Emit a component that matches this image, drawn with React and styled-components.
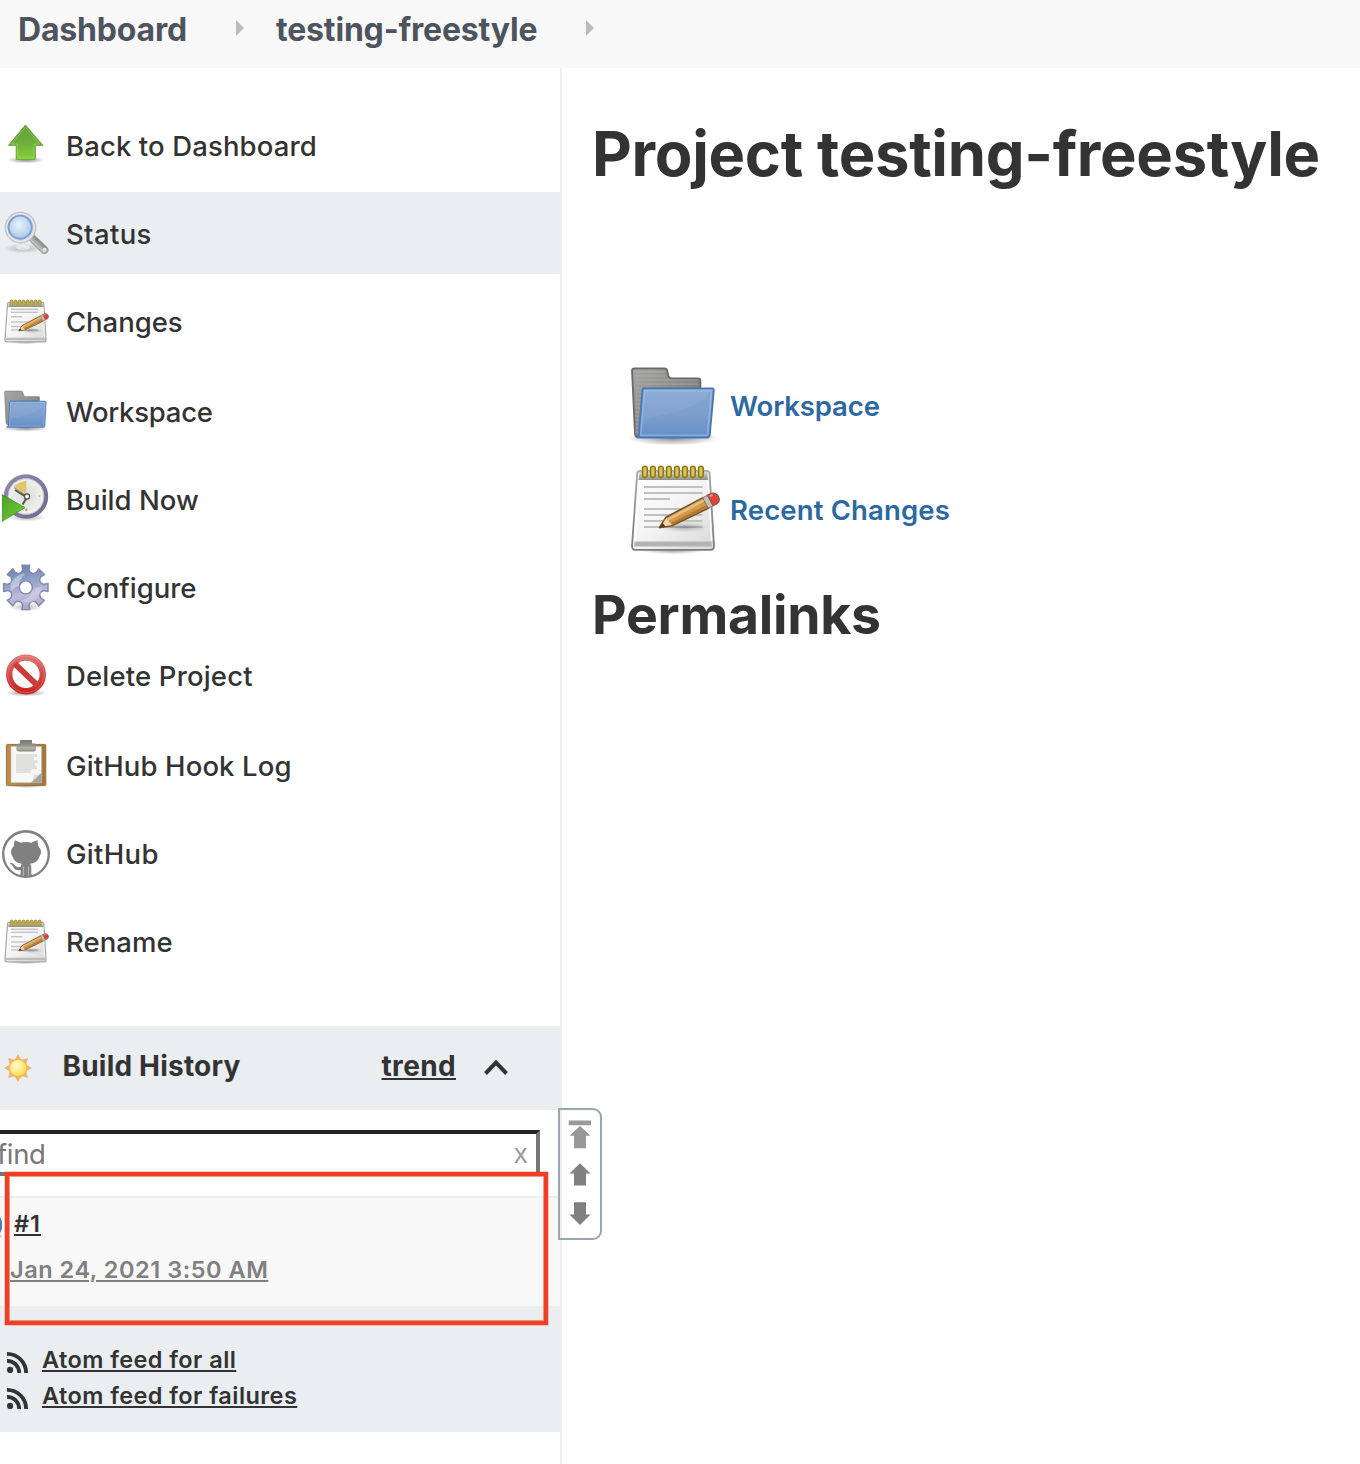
import React from "react";
import styled, { createGlobalStyle, css } from "styled-components";

const GlobalStyle = createGlobalStyle`
  * { box-sizing: border-box; }
  html, body { margin: 0; padding: 0; background: #fff; }
  body { font-family: "Inter", "Liberation Sans", sans-serif; color: #333; overflow: hidden; }
  svg { display: block; flex: none; }
`;

const Page = styled.div`
  width: 1360px;
  height: 1464px;
  display: flex;
  flex-direction: column;
  overflow: hidden;
  position: relative;
`;

const Breadcrumbs = styled.header`
  height: 68px;
  flex: none;
  display: flex;
  align-items: flex-start;
  padding-left: 18px;
  background: #f8f8f8;
`;

const Crumb = styled.a`
  width: ${(p) => p.$width}px;
  font-size: 32px;
  font-weight: 700;
  letter-spacing: -0.18px;
  line-height: 59px;
  color: #4d545d;
  white-space: nowrap;
`;

const CrumbArrow = styled.svg`
  margin: 20px 32px 0 0;
`;

const Body = styled.div`
  flex: 1;
  display: flex;
`;

const Sidebar = styled.aside`
  width: 562px;
  flex: none;
  border-right: 2px solid #eaeff2;
  overflow: hidden;
`;

const Nav = styled.nav`
  padding: 36px 0 44px;
`;

const NavItem = styled.a`
  display: flex;
  height: 82px;
  margin-top: ${(p) => p.$gap}px;
  padding-left: 2px;
  background: ${(p) => (p.$active ? "#eaeef1" : "transparent")};
  svg {
    margin-top: ${(p) => p.$iconTop || 17}px;
    filter: blur(0.5px);
  }
`;

const NavLabel = styled.span`
  margin-left: 16px;
  padding-top: 1px;
  font-size: 27.5px;
  font-weight: 450;
  line-height: 82px;
  letter-spacing: ${(p) => p.$track ?? 0.12}px;
  white-space: nowrap;
`;

const HistoryHeader = styled.div`
  height: 84px;
  display: flex;
  align-items: flex-start;
  padding: 0 0 0 3px;
  background: #eaeef1;
  svg { margin-top: 27px; }
`;

const HistoryTitle = styled.span`
  width: 319px;
  margin-left: 29.5px;
  font-size: 28px;
  font-weight: 650;
  line-height: 81px;
  letter-spacing: 0.2px;
`;

const underline = css`
  text-decoration: underline;
  text-decoration-thickness: 2px;
  text-underline-offset: 2px;
`;

const TrendLink = styled.a`
  width: 102.5px;
  font-size: 28px;
  font-weight: 650;
  line-height: 81px;
  letter-spacing: 0.35px;
  ${underline}
`;

const SearchArea = styled.div`
  padding: 20px 0;
`;

const SearchBox = styled.div`
  width: 550px;
  height: 46px;
  margin-left: -10px;
  display: flex;
  justify-content: space-between;
  padding: 0 8.5px 0 3px;
  border: 4px solid;
  border-color: #222 #767676 #767676 #222;
  font-size: 27.5px;
  line-height: 40px;
  color: #777;
`;

const Placeholder = styled.span`
  font-weight: 400;
  letter-spacing: -0.35px;
`;

const Clear = styled.span`
  font-family: "Liberation Sans", Arial, sans-serif;
  font-size: 27px;
  line-height: 40px;
  color: #999;
`;

const BuildRow = styled.div`
  height: 110px;
  border-top: 2px solid #eaeef1;
  background: #f8f8f8;
`;

const BuildLine = styled.div`
  display: flex;
  height: 46px;
  margin-left: -30px;
  svg { margin-top: 11px; }
`;

const BuildNumber = styled.a`
  margin-left: 12px;
  font-size: 23.5px;
  font-weight: 570;
  line-height: 51px;
  letter-spacing: 1px;
  ${underline}
`;

const BuildDate = styled.a`
  display: block;
  margin-left: 10px;
  font-size: 23.5px;
  font-weight: 570;
  line-height: 51px;
  letter-spacing: 0.54px;
  color: #808080;
  white-space: nowrap;
  ${underline}
`;

const Feeds = styled.div`
  height: 126px;
  padding: 36px 0 0 7px;
  background: #eaeef1;
`;

const Feed = styled.a`
  display: flex;
  height: 36px;
  svg { margin-top: 10px; }
  span {
    margin-left: 14px;
    font-size: 23.5px;
    font-weight: 570;
    line-height: 35px;
    letter-spacing: 0.44px;
    white-space: nowrap;
    ${underline}
  }
`;

const Main = styled.main`
  flex: 1;
  padding-left: 30px;
`;

const Title = styled.h1`
  margin: 0;
  padding-top: 46px;
  height: 288px;
  font-size: 61.5px;
  font-weight: 700;
  line-height: 80px;
  letter-spacing: -0.32px;
  white-space: nowrap;
`;

const Shortcut = styled.a`
  display: flex;
  height: 96px;
  margin: 0 0 8px 34px;
`;

const ShortcutLabel = styled.span`
  margin-left: 8px;
  font-size: 27.5px;
  font-weight: 570;
  line-height: 100px;
  letter-spacing: ${(p) => p.$track}px;
  color: #2c69a0;
  white-space: nowrap;
`;

const SectionTitle = styled.h2`
  margin: 15px 0 0;
  padding-top: 9px;
  font-size: 53.5px;
  font-weight: 700;
  line-height: 70px;
  letter-spacing: -0.28px;
`;

const ScrollPanel = styled.div`
  position: absolute;
  left: 558px;
  top: 1108px;
  width: 44px;
  height: 132px;
  padding: 10px 0 0 8px;
  border: 2px solid #9aa6ae;
  border-radius: 0 9px 9px 0;
  svg { filter: blur(0.4px); }
`;

const Highlight = styled.div`
  position: absolute;
  left: 5px;
  top: 1172px;
  width: 543px;
  height: 153px;
  border: 4px solid #ee4024;
  box-shadow: 0 0 0 0.5px rgba(238, 64, 36, 0.55), inset 0 0 0 1px rgba(238, 64, 36, 0.55);
`;

/* ---------- icons, all on a 48-unit grid ---------- */

const UpIcon = () => (
  <svg width="48" height="48" viewBox="0 0 48 48">
    <defs>
      <linearGradient id="up" x1="0" y1="0" x2="0" y2="1">
        <stop offset="0" stopColor="#5f9f35" /><stop offset=".55" stopColor="#6fb03c" /><stop offset="1" stopColor="#84d336" />
      </linearGradient>
      <radialGradient id="shade"><stop offset="0" stopColor="#000" stopOpacity=".45" /><stop offset="1" stopColor="#000" stopOpacity="0" /></radialGradient>
    </defs>
    <ellipse cx="23.7" cy="39" rx="19" ry="3.5" fill="url(#shade)" />
    <path d="M23.4 4 L41 24.4 H33.4 V38.4 H14.2 V24.4 H6.4 Z" fill="url(#up)" stroke="#6fa548" strokeWidth="1" strokeLinejoin="round" />
    <path d="M23.4 6.5 L37.8 23 H32 V37 H15.6 V23 H9.5 Z" fill="none" stroke="#a3dc70" strokeOpacity=".5" />
  </svg>
);

const SearchIcon = () => (
  <svg width="48" height="48" viewBox="0 0 48 48">
    <defs>
      <radialGradient id="lens" cx=".45" cy=".4" r=".6"><stop offset="0" stopColor="#e9f2fc" /><stop offset=".6" stopColor="#c3d8f1" /><stop offset="1" stopColor="#a9c6ea" /></radialGradient>
      <linearGradient id="handle" x1="0" y1="1" x2="1" y2="0"><stop offset=".3" stopColor="#c9c9c7" /><stop offset=".7" stopColor="#858585" /></linearGradient>
    </defs>
    <ellipse cx="21" cy="39.5" rx="19" ry="5" fill="url(#shade)" opacity=".55" />
    <ellipse cx="21" cy="38.5" rx="7" ry="2.5" fill="#fff" opacity=".6" />
    <path d="M31 30 L42.5 41" stroke="#a4a6a6" strokeWidth="8" strokeLinecap="round" />
    <path d="M31 29.5 L42.5 40.5" stroke="url(#handle)" strokeWidth="6" strokeLinecap="round" />
    <circle cx="42.6" cy="40.8" r="2" fill="#e4e4e2" />
    <circle cx="18.5" cy="18.6" r="14.4" fill="#d8e4f2" stroke="#bdbfbe" strokeWidth="2.8" />
    <circle cx="18.5" cy="18.6" r="13.8" fill="none" stroke="#e6e8e8" strokeWidth="1.6" />
    <circle cx="18.2" cy="18.2" r="11.6" fill="url(#lens)" stroke="#7d9fd0" strokeWidth="1.9" />
  </svg>
);

const NotepadIcon = ({ size = 48 }) => {
  const small = size === 48;
  const lines = small
    ? [[12.3, 36], [15.3, 36], [19.7, 20], [25, 32], [29.5, 26], [33, 36]]
    : [[13.5, 38.2], [16.5, 38.2], [19.5, 22], [24.5, 38.2], [27.5, 38.2], [30.5, 38.2], [33.5, 38.2]];
  return (
    <svg width={size} height={size} viewBox="0 0 48 48">
      <defs>
        <linearGradient id="page" x1="0" y1="0" x2="1" y2="1"><stop offset="0" stopColor="#fff" /><stop offset=".5" stopColor="#f4f4f4" /><stop offset="1" stopColor="#d8d8d8" /></linearGradient>
        <linearGradient id="edge" x1="0" y1="0" x2="0" y2="1"><stop offset="0" stopColor="#a8a8a4" /><stop offset="1" stopColor="#7c7c7c" /></linearGradient>
        <linearGradient id="band" x1="0" y1="0" x2="0" y2="1"><stop offset="0" stopColor="#d6d6d2" /><stop offset="1" stopColor="#8f8f86" /></linearGradient>
      </defs>
      <ellipse cx="23.5" cy="44.6" rx="17" ry="2.6" fill="url(#shade)" />
      <path d="M7 5.4 H40.4 Q41.7 5.4 41.8 6.8 L44 43 Q44 44.9 42.4 44.9 H4.6 Q3 44.9 3 43 L5.6 6.8 Q5.7 5.4 7 5.4Z" fill="url(#page)" stroke={small ? "#a6a6a4" : "url(#edge)"} strokeWidth={small ? 1.3 : 0.9} />
      <path d="M6.7 6 H40.7 L41 10 H6.3Z" fill="url(#band)" />
      <path d="M4.4 40.8 H42.6 L43 43.3 H4Z" fill={small ? "#bdbdbb" : "#b3b3b1"} />
      <path d="M6.5 10.5 L4.4 40.3 M41 10.5 L42.8 40.3" stroke="#fff" strokeWidth=".7" />
      {lines.map(([y, x], i) => <path key={i} d={`M9 ${y} H${x}`} stroke={small ? "#c4c4c4" : "#c0c0c0"} strokeWidth={small ? 1.4 : 1} />)}
      {Array.from({ length: 8 }, (_, i) => (
        <rect key={i} x={8.3 + i * 4} y="3.1" width={small ? 2.8 : 2.3} height="5.6" rx="1.15" fill={small ? "#c4b04c" : "#dbc856"} stroke={small ? "#a08f40" : "#8d7b18"} strokeWidth=".8" />
      ))}
      <ellipse cx="29" cy="33.5" rx="12" ry="2.6" fill="url(#shade)" opacity=".6" />
      <path d="M16.7 33.8 L20 28.6 L38.5 18.8 L41.4 24 L23 32.9 Z" fill="#d0994c" stroke="#7b5420" strokeWidth=".8" strokeLinejoin="round" />
      <path d="M21 29.7 L39.2 20" stroke="#e6bd7c" strokeWidth="1.4" />
      <path d="M22.8 31.9 L40.8 22.9" stroke="#b07a30" strokeWidth="1.2" />
      <path d="M17.3 33.4 L20.2 29 L22.9 32.5Z" fill="#e9d6ac" />
      <path d="M16.6 34 L18.3 31.4 L19.7 33.2Z" fill="#4a3a20" />
      <path d="M38.3 18.9 L40.8 17.6 L43.6 22.8 L41.2 24Z" fill="#c5c3c0" stroke="#8c7962" strokeWidth=".5" />
      <path d="M40.8 17.6 L42.8 16.7 Q45 16.3 46.2 18.3 Q47.3 20.7 45.4 21.9 L43.5 22.8Z" fill="#e04141" stroke="#8f5a43" strokeWidth=".7" />
      <path d="M41.8 18.1 L43.3 17.5" stroke="#f29a9a" />
    </svg>
  );
};

const FolderIcon = ({ size = 48 }) => {
  const small = size === 48;
  const back = small
    ? "M3.5 4 H19 Q20.3 4 20.8 5.4 L22.3 9.4 H36.5 Q37.5 9.4 37.5 10.5 V38 H6.4 Q4.5 38 4 36 L2.5 5 Q2.5 4 3.5 4Z"
    : "M4.2 6.2 H19.2 Q20.4 6.2 20.6 7.4 L21.2 10 Q21.5 11.2 22.8 11.2 H36 Q37.2 11.2 37.2 12.4 V38 L6 40.5 Q4.6 40.5 4.5 39 L3 7.4 Q3 6.2 4.2 6.2Z";
  const front = small
    ? "M8.5 14.2 H43.3 Q44 14.2 44 15 L42.8 39 Q42.7 40.2 41.5 40.2 H4.8 Q6.4 40 6.5 38 L7.6 15 Q7.7 14.2 8.5 14.2Z"
    : "M9.2 16.2 H43.1 Q44 16.2 43.9 17.2 L41.9 39.5 Q41.7 40.8 40.4 40.8 H5.3 Q6.3 40.6 6.4 39.5 L8.2 17.2 Q8.3 16.2 9.2 16.2Z";
  const ridge = small ? 6 : 8;
  return (
    <svg width={size} height={size} viewBox="0 0 48 48">
      <defs>
        <linearGradient id="back" x1="0" y1="0" x2="1" y2="1"><stop offset="0" stopColor="#a5a5a3" /><stop offset="1" stopColor="#6b6b69" /></linearGradient>
        <linearGradient id="front" x1="0" y1="0" x2="0" y2="1"><stop offset="0" stopColor="#86a8d4" /><stop offset=".5" stopColor="#7c9fce" /><stop offset="1" stopColor="#668fc8" /></linearGradient>
      </defs>
      <ellipse cx="23.5" cy="41" rx="23" ry="3.8" fill="url(#shade)" />
      <path d={back} fill="url(#back)" stroke="#6a6a68" strokeOpacity={small ? 0.5 : 1} strokeWidth=".9" />
      {Array.from({ length: 16 }, (_, i) => {
        const y = ridge + i * 2;
        return <path key={i} d={`M4.6 ${y} H${y < ridge + 4 ? 19.5 : y < ridge + 8 ? 36 : 8}`} stroke="#c4c4c2" strokeOpacity=".45" strokeWidth=".6" />;
      })}
      <path d={front} fill="url(#front)" stroke="#4a77b4" strokeWidth=".9" />
      <path d={small ? "M8.6 15.4 H42.7 L41.6 39 H7.4Z" : "M9.4 17.3 H42.7 L40.8 39.6 H7.3Z"} fill="none" stroke="#b9cdea" strokeOpacity=".45" strokeWidth=".8" />
      <path d="M8.5 32 Q16 30 26 27.5 Q36 25 41.5 19 L41 17.8 H9.8Z" fill="#fff" opacity=".06" />
    </svg>
  );
};

const BuildIcon = () => (
  <svg width="48" height="48" viewBox="0 0 48 48">
    <defs>
      <linearGradient id="ring" x1="0" y1="0" x2="1" y2="1"><stop offset="0" stopColor="#8d8bab" /><stop offset="1" stopColor="#6d6a93" /></linearGradient>
      <radialGradient id="face"><stop offset="0" stopColor="#dcdcda" /><stop offset="1" stopColor="#f3f3f0" /></radialGradient>
      <linearGradient id="play" x1="0" y1="0" x2="1" y2="1"><stop offset="0" stopColor="#4ca028" /><stop offset="1" stopColor="#72cf35" /></linearGradient>
    </defs>
    <ellipse cx="25" cy="43.5" rx="19" ry="4" fill="url(#shade)" opacity=".7" />
    <circle cx="24" cy="22.5" r="20.1" fill="url(#face)" stroke="url(#ring)" strokeWidth="4.2" />
    <circle cx="24" cy="22.5" r="17.8" fill="none" stroke="#c2c0cd" strokeWidth="1" />
    <path d="M24.3 20.5 L12 12.5 Q16.5 7.8 24.3 6.8Z" fill="#e2c66e" />
    <path d="M12 13.5 L24 21.5" stroke="#9a9a94" strokeWidth="1.2" />
    <path d="M13 16 L25 23.5 L20.5 30.5" fill="none" stroke="#55554f" strokeWidth="2" />
    <circle cx="25" cy="22.5" r="2.6" fill="#f4f4f4" stroke="#4c4c48" strokeWidth="1.2" />
    <circle cx="37.5" cy="22.3" r="1" fill="#b8b8b4" /><circle cx="24.3" cy="35.8" r="1.2" fill="#9a9a96" />
    <path d="M0 20.5 L23 33.7 L0 47.3Z" fill="url(#play)" stroke="#4c9132" strokeWidth=".9" />
  </svg>
);

const gearPath = (() => {
  const pts = [];
  for (let i = 0; i < 8; i++) {
    const a = (i * Math.PI) / 4 - Math.PI / 2;
    [[-0.3, 15.6], [-0.17, 18.2], [-0.18, 22.6], [0.18, 22.6], [0.17, 18.2], [0.3, 15.6]].forEach(([d, r]) =>
      pts.push(`${(23.8 + r * Math.cos(a + d)).toFixed(2)} ${(23.4 + r * Math.sin(a + d)).toFixed(2)}`));
  }
  return `M${pts.join("L")}Z M30.3 23.4 A6.5 6.5 0 1 0 17.3 23.4 A6.5 6.5 0 1 0 30.3 23.4Z`;
})();

const GearIcon = () => (
  <svg width="48" height="48" viewBox="0 0 48 48">
    <defs>
      <linearGradient id="gear" x1=".4" y1="0" x2=".6" y2="1"><stop offset="0" stopColor="#6782ac" /><stop offset=".4" stopColor="#94a5cb" /><stop offset=".65" stopColor="#bdbbdc" /><stop offset="1" stopColor="#a9a5c9" /></linearGradient>
    </defs>
    <ellipse cx="24" cy="43" rx="17" ry="4.5" fill="url(#shade)" opacity=".6" />
    <path d={gearPath} fill="url(#gear)" fillRule="evenodd" stroke="#8489ad" strokeWidth="1.4" strokeLinejoin="round" />
    <path d="M10 27 Q6 20 14 13 Q20 9 23 10 Q16 17 17 22 Q12 23 10 27Z" fill="#d8e2f3" opacity=".55" />
    <path d="M30 27 Q36 21 40 24 Q38 33 32 37 Q24 40 19 37 Q29 34 30 27Z" fill="#ddd5ef" opacity=".5" />
  </svg>
);

const DeleteIcon = () => (
  <svg width="48" height="48" viewBox="0 0 48 48">
    <defs>
      <linearGradient id="no" x1="0" y1="0" x2="0" y2="1"><stop offset="0" stopColor="#dd7272" /><stop offset=".5" stopColor="#d24a4a" /><stop offset="1" stopColor="#cd2525" /></linearGradient>
    </defs>
    <ellipse cx="24" cy="42" rx="21" ry="3.4" fill="url(#shade)" />
    <circle cx="24" cy="23.4" r="16.6" fill="#fff" />
    <circle cx="24" cy="23.4" r="16.8" fill="none" stroke="url(#no)" strokeWidth="6.4" />
    <path d="M12.6 12.6 L35.4 34.4" stroke="#cf3a3a" strokeWidth="5.8" />
    <circle cx="24" cy="23.4" r="18.2" fill="none" stroke="#f2a5a5" strokeOpacity=".35" />
  </svg>
);

const ClipboardIcon = () => (
  <svg width="48" height="48" viewBox="0 0 48 48">
    <defs>
      <linearGradient id="board" x1="0" y1="0" x2="1" y2="0"><stop offset="0" stopColor="#c08b45" /><stop offset="1" stopColor="#a3763b" /></linearGradient>
      <linearGradient id="clip" x1="0" y1="0" x2="0" y2="1"><stop offset="0" stopColor="#777a70" /><stop offset=".45" stopColor="#8d9088" /><stop offset=".7" stopColor="#b4b6ae" /><stop offset="1" stopColor="#85877e" /></linearGradient>
    </defs>
    <ellipse cx="24" cy="45.5" rx="19" ry="2.4" fill="url(#shade)" />
    <rect x="4.4" y="4.4" width="39.4" height="41.2" rx="1" fill="url(#board)" stroke="#8f6a35" strokeWidth=".9" />
    <path d="M9 6.5 H39.5 V42.7 H9Z" fill="#f7f7f6" stroke="#c4c0b6" strokeWidth=".7" />
    <path d="M14 14 H35 V17 H32 V20 H35.5 V23 H33 V26 H35 V29 H30 L28 33 H14Z" fill="#dadad9" opacity=".8" />
    <path d="M39.5 33 V42.7 H29 Q32.5 40 32 34.5 Q35 36.5 39.5 33Z" fill="#a4a49f" />
    <path d="M29 42.7 Q32.5 40 32 34.5 Q35 36.5 39.5 33Z" fill="#dcdcda" />
    <path d="M18 0 H30 V3.5 H33 Q34 4 34 6 V9 Q34 11.5 31 11.5 H17.5 Q14.3 11.5 14.3 9 V6 Q14.3 3.5 18 3.5Z" fill="url(#clip)" />
  </svg>
);

const GithubIcon = () => (
  <svg width="48" height="48" viewBox="0 0 48 48">
    <circle cx="24" cy="24" r="24" fill="#808080" />
    <path transform="translate(2.4 2.1) scale(1.8)" fill="#fff" d="M12 .297c-6.63 0-12 5.373-12 12 0 5.303 3.438 9.8 8.205 11.385.6.113.82-.258.82-.577 0-.285-.01-1.04-.015-2.04-3.338.724-4.042-1.61-4.042-1.61C4.422 18.07 3.633 17.7 3.633 17.7c-1.087-.744.084-.729.084-.729 1.205.084 1.838 1.236 1.838 1.236 1.07 1.835 2.809 1.305 3.495.998.108-.776.417-1.305.76-1.605-2.665-.3-5.466-1.332-5.466-5.93 0-1.31.465-2.38 1.235-3.22-.135-.303-.54-1.523.105-3.176 0 0 1.005-.322 3.3 1.23.96-.267 1.98-.399 3-.405 1.02.006 2.04.138 3 .405 2.28-1.552 3.285-1.23 3.285-1.23.645 1.653.24 2.873.12 3.176.765.84 1.23 1.91 1.23 3.22 0 4.61-2.805 5.625-5.475 5.92.42.36.81 1.096.81 2.22 0 1.606-.015 2.896-.015 3.286 0 .315.21.69.825.57C20.565 22.092 24 17.592 24 12.297c0-6.627-5.373-12-12-12" />
    <path fill="#808080" d="M12.5 10.2 L18 12.2 L17 20 L10.6 19 Q10.8 17.5 12.6 15.6Z M35.5 10.2 L30 12.2 L31 20 L37.4 19 Q37.2 17.5 35.4 15.6Z" />
    <ellipse cx="24" cy="22" rx="15" ry="10" fill="#808080" />
    <path d="M21.5 36.5 V46 M26.5 36.5 V46" stroke="#b0b0b0" strokeWidth="1.2" />
  </svg>
);

const SunIcon = () => (
  <svg width="30" height="30" viewBox="0 0 30 30">
    <defs>
      <radialGradient id="sun" cx=".4" cy=".35" r=".7"><stop offset="0" stopColor="#fffbd0" /><stop offset=".6" stopColor="#fae978" /><stop offset="1" stopColor="#f3d94a" /></radialGradient>
    </defs>
    {Array.from({ length: 8 }, (_, i) => <path key={i} d="M15 .9 L18.6 7.5 H11.4Z" fill="#f0b46a" transform={`rotate(${i * 45} 15 15)`} />)}
    <circle cx="15" cy="15" r="8.8" fill="url(#sun)" stroke="#f1b766" strokeWidth="1.4" />
  </svg>
);

const BallIcon = () => (
  <svg width="32" height="32" viewBox="0 0 32 32">
    <ellipse cx="20" cy="27" rx="15" ry="4" fill="url(#shade)" />
    <circle cx="19" cy="16" r="13.4" fill="#5577b8" />
  </svg>
);

const RssIcon = () => (
  <svg width="21" height="21" viewBox="0 0 21 21" fill="none" stroke="#333">
    <circle cx="3.1" cy="17.9" r="3.1" fill="#333" stroke="none" />
    <path d="M0 8.8 A12 12 0 0 1 12.2 21" strokeWidth="3.8" />
    <path d="M0 1.9 A19 19 0 0 1 19.1 21" strokeWidth="3.8" />
  </svg>
);

const CrumbChevron = () => (
  <CrumbArrow width="8" height="16" viewBox="0 0 8 16"><path d="M0 0 L8 8 L0 16Z" fill="#bcbcbc" /></CrumbArrow>
);

const navItems = [
  { label: "Back to Dashboard", Icon: UpIcon, gap: 0 },
  { label: "Status", Icon: SearchIcon, active: true, track: 0.35 },
  { label: "Changes", Icon: NotepadIcon, track: -0.05 },
  { label: "Workspace", Icon: FolderIcon, track: -0.25, gap: 8 },
  { label: "Build Now", Icon: BuildIcon, top: 16, track: 0.02 },
  { label: "Configure", Icon: GearIcon, top: 18, track: -0.02 },
  { label: "Delete Project", Icon: DeleteIcon, track: 0.17 },
  { label: "GitHub Hook Log", Icon: ClipboardIcon, top: 16, gap: 8 },
  { label: "GitHub", Icon: GithubIcon, top: 18, track: 0.3 },
  { label: "Rename", Icon: NotepadIcon, track: 0.04 },
];

export default function App() {
  return (
    <Page>
      <GlobalStyle />
      <Breadcrumbs>
        <Crumb $width={218}>Dashboard</Crumb>
        <CrumbChevron />
        <Crumb $width={310}>testing-freestyle</Crumb>
        <CrumbChevron />
      </Breadcrumbs>
      <Body>
        <Sidebar>
          <Nav>
            {navItems.map(({ label, Icon, active, top, track, gap = 6 }) => (
              <NavItem key={label} $active={active} $iconTop={top} $gap={gap}>
                <Icon />
                <NavLabel $track={track}>{label}</NavLabel>
              </NavItem>
            ))}
          </Nav>
          <HistoryHeader>
            <SunIcon />
            <HistoryTitle>Build History</HistoryTitle>
            <TrendLink>trend</TrendLink>
            <svg width="24" height="30" viewBox="0 0 24 30">
              <path d="M1.5 20.5 L12 9.7 L22.5 20.5" fill="none" stroke="#333" strokeWidth="4" />
            </svg>
          </HistoryHeader>
          <SearchArea>
            <SearchBox>
              <Placeholder>find</Placeholder>
              <Clear>x</Clear>
            </SearchBox>
          </SearchArea>
          <BuildRow>
            <BuildLine>
              <BallIcon />
              <BuildNumber>#1</BuildNumber>
            </BuildLine>
            <BuildDate>Jan 24, 2021 3:50 AM</BuildDate>
          </BuildRow>
          <Feeds>
            <Feed><RssIcon /><span>Atom feed for all</span></Feed>
            <Feed><RssIcon /><span>Atom feed for failures</span></Feed>
          </Feeds>
        </Sidebar>
        <Main>
          <Title>Project testing-freestyle</Title>
          <Shortcut>
            <FolderIcon size={96} />
            <ShortcutLabel $track={-0.14}>Workspace</ShortcutLabel>
          </Shortcut>
          <Shortcut>
            <NotepadIcon size={96} />
            <ShortcutLabel $track={0.15}>Recent Changes</ShortcutLabel>
          </Shortcut>
          <SectionTitle>Permalinks</SectionTitle>
        </Main>
      </Body>
      <ScrollPanel>
        <svg width="24" height="110" viewBox="0 0 24 110">
          <path d="M.7 .5 H23 V5.3 H.7Z M12 6 L22.5 15.8 H18 V28.2 H6 V15.8 H1.5Z" fill="#999" />
          <path d="M12 43.2 L22.5 53.6 H18 V65.6 H6 V53.6 H1.5Z" fill="#808080" />
          <path d="M6 82.3 H18 V94.6 H22.5 L12 105 L1.5 94.6 H6Z" fill="#808080" />
        </svg>
      </ScrollPanel>
      <Highlight />
    </Page>
  );
}
